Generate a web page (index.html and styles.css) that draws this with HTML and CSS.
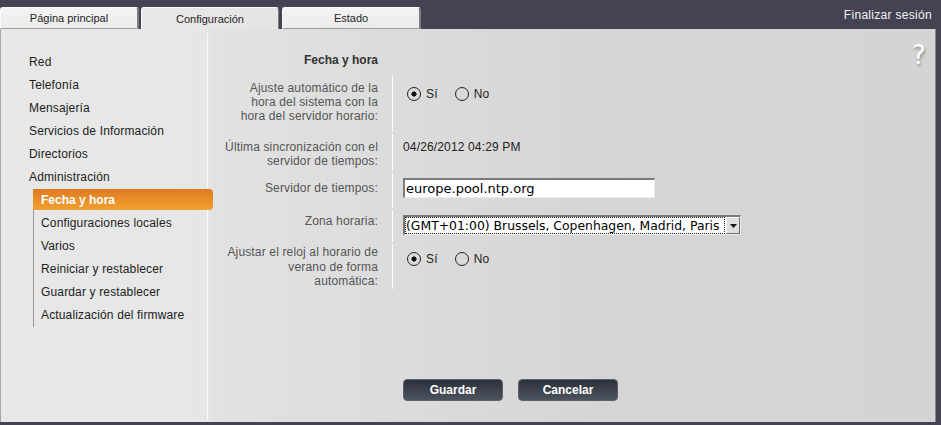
FILE: index.html
```html
<!DOCTYPE html>
<html lang="es">
<head>
<meta charset="utf-8">
<title>Fecha y hora</title>
<link rel="stylesheet" href="styles.css">
</head>
<body>
<header class="topbar">
  <nav class="tabs">
    <a class="tab">Página principal</a>
    <a class="tab tab-active">Configuración</a>
    <a class="tab">Estado</a>
  </nav>
  <a class="logout">Finalizar sesión</a>
</header>
<main class="panel">
  <aside class="sidenav">
    <div class="nav-item">Red</div>
    <div class="nav-item">Telefonía</div>
    <div class="nav-item">Mensajería</div>
    <div class="nav-item">Servicios de Información</div>
    <div class="nav-item">Directorios</div>
    <div class="nav-item">Administración</div>
    <div class="subnav">
      <div class="sub-item sub-active">Fecha y hora</div>
      <div class="sub-item">Configuraciones locales</div>
      <div class="sub-item">Varios</div>
      <div class="sub-item">Reiniciar y restablecer</div>
      <div class="sub-item">Guardar y restablecer</div>
      <div class="sub-item">Actualización del firmware</div>
    </div>
  </aside>
  <section class="content">
    <h1 class="title">Fecha y hora</h1>
    <div class="form">
      <div class="label l1">Ajuste automático de la<br>hora del sistema con la<br>hora del servidor horario:</div>
      <div class="value v1">
        <div class="radios">
          <label class="radio"><input type="radio" name="auto" checked><span>Sí</span></label>
          <label class="radio"><input type="radio" name="auto"><span>No</span></label>
        </div>
      </div>
      <div class="label l2">Última sincronización con el<br>servidor de tiempos:</div>
      <div class="value v2">04/26/2012 04:29 PM</div>
      <div class="label l3">Servidor de tiempos:</div>
      <div class="value v3"><input class="text-input" type="text" value="europe.pool.ntp.org"></div>
      <div class="label l4">Zona horaria:</div>
      <div class="value v4">
        <div class="select">
          <span class="select-text">(GMT+01:00) Brussels, Copenhagen, Madrid, Paris</span>
          <span class="select-arrow"><svg width="7" height="4" viewBox="0 0 7 4"><path d="M0 0H7L3.5 4Z" fill="#111"/></svg></span>
        </div>
      </div>
      <div class="label l5">Ajustar el reloj al horario de<br>verano de forma<br>automática:</div>
      <div class="value v5">
        <div class="radios">
          <label class="radio"><input type="radio" name="dst" checked><span>Sí</span></label>
          <label class="radio"><input type="radio" name="dst"><span>No</span></label>
        </div>
      </div>
    </div>
    <div class="buttons">
      <button class="btn">Guardar</button>
      <button class="btn">Cancelar</button>
    </div>
  </section>
  <span class="help">?</span>
</main>
</body>
</html>
```
FILE: styles.css
```css
html, body {
  margin: 0;
  padding: 0;
}
body {
  background: #454353;
  font-family: "Liberation Sans", Arial, sans-serif;
  font-size: 12px;
  letter-spacing: 0.15px;
  color: #222;
  width: 941px;
  height: 425px;
  overflow: hidden;
}
.topbar {
  height: 29px;
  display: flex;
  justify-content: space-between;
  align-items: flex-start;
}
.tabs {
  display: flex;
  align-items: flex-end;
  height: 29px;
  gap: 2px;
}
.tab {
  box-sizing: border-box;
  width: 139px;
  height: 22px;
  display: flex;
  align-items: center;
  justify-content: center;
  font-size: 11px;
  letter-spacing: 0;
  color: #1e1e1e;
  background: linear-gradient(#f3f3f3, #ececec);
  border-top: 1px solid #fafafa;
  border-left: 1px solid #fafafa;
  border-right: 2px solid #7c7c7c;
  border-bottom: 1px solid #9c9c9c;
  border-radius: 3px 3px 0 0;
}
.tab-active {
  width: 138px;
  background: linear-gradient(to right, #e8e8e8, #e5e5e5);
  border-bottom: none;
  border-right: 1px solid #7c7c7c;
  margin-right: 1px;
}
.logout {
  color: #f2f2f2;
  font-size: 12px;
  letter-spacing: 0.3px;
  margin-top: 8px;
  margin-right: 9px;
}
.panel {
  position: relative;
  box-sizing: border-box;
  height: 393px;
  margin-right: 5px;
  display: flex;
  background: linear-gradient(to right, #e8e8e8 0, #e6e6e6 207px, #e2e2e2 212px, #d5d5d5 600px, #d4d4d4 100%);
  border-left: 1px solid #a8a8a8;
  border-right: 1px solid #8a8a8a;
}
.sidenav {
  width: 206px;
  margin: 4px 0 2px;
  padding-top: 18px;
  border-right: 1px solid #fafafa;
  box-sizing: content-box;
}
.nav-item {
  height: 23px;
  line-height: 23px;
  padding-left: 28px;
  color: #222;
}
.subnav {
  margin-left: 32px;
  border-left: 1px solid #9a9a9a;
}
.sub-item {
  height: 23px;
  line-height: 23px;
  padding-left: 7px;
  color: #222;
}
.sub-active {
  width: 172px;
  height: 21px;
  line-height: 22px;
  margin-bottom: 2px;
  margin-left: -1px;
  padding-left: 8px;
  background: linear-gradient(#e07a22, #f0a12e);
  border-radius: 0 4px 4px 0;
  color: #fff;
  font-weight: bold;
  letter-spacing: 0;
}
.content {
  flex: 1;
  padding-top: 24px;
}
.title {
  margin: 0 0 9px;
  width: 170px;
  text-align: right;
  font-size: 12px;
  line-height: 14px;
  font-weight: bold;
  letter-spacing: 0;
  color: #333;
}
.form {
  display: grid;
  grid-template-columns: 184px 1fr;
  grid-template-rows: 56px 37px 35px 32px 45px;
  row-gap: 2px;
}
.label {
  text-align: right;
  padding-right: 14px;
  color: #555;
  line-height: 14px;
  padding-top: 5px;
  white-space: nowrap;
}
.value {
  border-left: 1px solid #fbfbfb;
  padding-left: 10px;
  line-height: 14px;
  padding-top: 5px;
  color: #222;
}
.l2 { padding-top: 6px; }
.l3 { padding-top: 8px; }
.l4 { padding-top: 4px; }
.l5 { padding-top: 1px; line-height: 14.5px; }
.v1 { padding-top: 11px; }
.v2 { padding-top: 6px; }
.v5 { padding-top: 8px; }
.radios {
  display: flex;
  align-items: center;
  padding-left: 4px;
  gap: 17px;
}
.radio {
  display: flex;
  align-items: center;
  gap: 5px;
}
.radio input {
  appearance: none;
  -webkit-appearance: none;
  margin: 0;
  width: 14px;
  height: 14px;
  box-sizing: border-box;
  border: 1.5px solid #222;
  border-radius: 50%;
  background: transparent;
}
.radio input:checked {
  background: radial-gradient(circle, #111 0, #111 2.3px, transparent 2.9px);
}
.text-input {
  box-sizing: border-box;
  width: 252px;
  height: 20px;
  margin: 0;
  padding: 0 0 0 1px;
  font-family: "DejaVu Sans", sans-serif;
  font-size: 13px;
  letter-spacing: 0;
  color: #000;
  background: #fff;
  border-style: solid;
  border-width: 2px 1px 1px 2px;
  border-color: #7a7a7a #ececec #ececec #7a7a7a;
  outline: none;
}
.select {
  box-sizing: border-box;
  width: 338px;
  height: 20px;
  display: flex;
  align-items: stretch;
  background: #fff;
  border-style: solid;
  border-width: 2px 1px 1px 2px;
  border-color: #7a7a7a #ececec #ececec #7a7a7a;
}
.select-text {
  flex: 1;
  font-family: "DejaVu Sans", sans-serif;
  font-size: 12.4px;
  letter-spacing: 0;
  color: #000;
  line-height: 15px;
  border: 1px dotted #222;
  white-space: nowrap;
  overflow: hidden;
  margin-right: 1px;
}
.select-arrow {
  width: 14px;
  box-sizing: border-box;
  display: flex;
  align-items: center;
  justify-content: center;
  background: #dedede;
  border-style: solid;
  border-width: 1px;
  border-color: #fafafa #6e6e6e #6e6e6e #fafafa;
}
.buttons {
  display: flex;
  gap: 15px;
  margin-left: 195px;
  margin-top: 90px;
}
.btn {
  box-sizing: border-box;
  width: 100px;
  height: 22px;
  padding: 0;
  border: 1px solid #5c616b;
  border-radius: 4px;
  background: linear-gradient(#2b303a, #4e545e);
  color: #fff;
  font-family: "Liberation Sans", Arial, sans-serif;
  font-weight: bold;
  font-size: 12px;
}
.help {
  position: absolute;
  top: 12px;
  right: 9px;
  font-family: "DejaVu Sans", sans-serif;
  font-size: 26px;
  line-height: 28px;
  color: #fff;
  text-shadow: 1px 2px 3px rgba(0, 0, 0, 0.35);
}
```
